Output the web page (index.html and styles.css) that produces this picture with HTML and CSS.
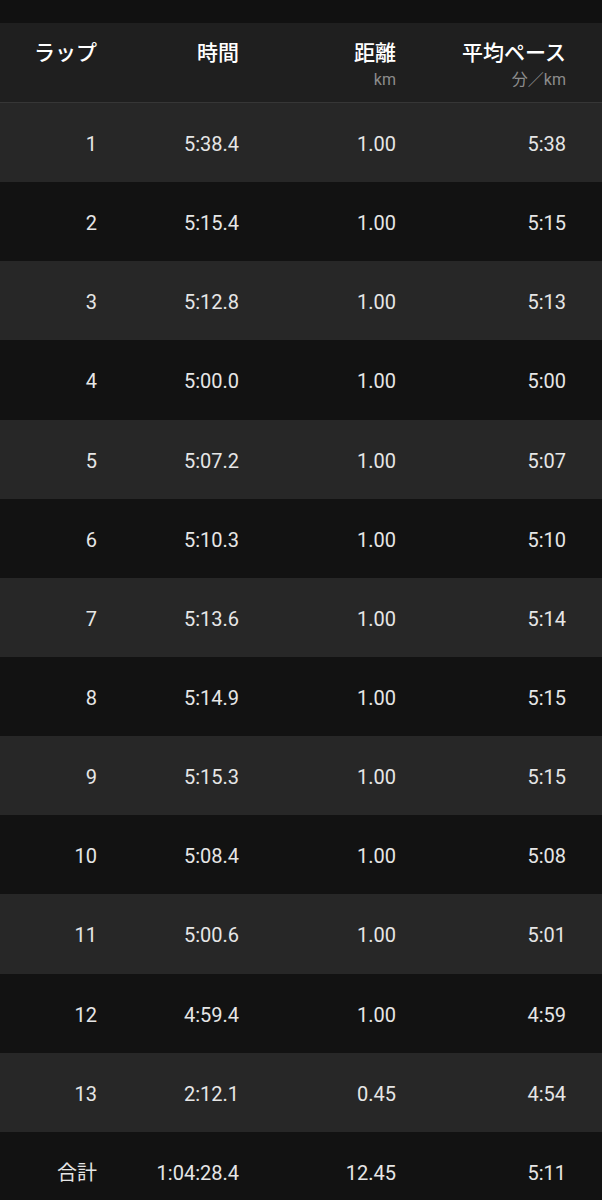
FILE: index.html
```html
<!DOCTYPE html>
<html lang="ja">
<head>
<meta charset="utf-8">
<link rel="stylesheet" href="styles.css">
</head>
<body>
<div class="topbar"></div>
<div class="table">
  <div class="row head">
    <div class="cell"><span class="title">ラップ</span></div>
    <div class="cell"><span class="title">時間</span></div>
    <div class="cell"><span class="title">距離</span><span class="unit">km</span></div>
    <div class="cell"><span class="title">平均ペース</span><span class="unit">分／km</span></div>
  </div>
  <div class="row odd"><div class="cell">1</div><div class="cell">5:38.4</div><div class="cell">1.00</div><div class="cell">5:38</div></div>
  <div class="row even"><div class="cell">2</div><div class="cell">5:15.4</div><div class="cell">1.00</div><div class="cell">5:15</div></div>
  <div class="row odd"><div class="cell">3</div><div class="cell">5:12.8</div><div class="cell">1.00</div><div class="cell">5:13</div></div>
  <div class="row even"><div class="cell">4</div><div class="cell">5:00.0</div><div class="cell">1.00</div><div class="cell">5:00</div></div>
  <div class="row odd"><div class="cell">5</div><div class="cell">5:07.2</div><div class="cell">1.00</div><div class="cell">5:07</div></div>
  <div class="row even"><div class="cell">6</div><div class="cell">5:10.3</div><div class="cell">1.00</div><div class="cell">5:10</div></div>
  <div class="row odd"><div class="cell">7</div><div class="cell">5:13.6</div><div class="cell">1.00</div><div class="cell">5:14</div></div>
  <div class="row even"><div class="cell">8</div><div class="cell">5:14.9</div><div class="cell">1.00</div><div class="cell">5:15</div></div>
  <div class="row odd"><div class="cell">9</div><div class="cell">5:15.3</div><div class="cell">1.00</div><div class="cell">5:15</div></div>
  <div class="row even"><div class="cell">10</div><div class="cell">5:08.4</div><div class="cell">1.00</div><div class="cell">5:08</div></div>
  <div class="row odd"><div class="cell">11</div><div class="cell">5:00.6</div><div class="cell">1.00</div><div class="cell">5:01</div></div>
  <div class="row even"><div class="cell">12</div><div class="cell">4:59.4</div><div class="cell">1.00</div><div class="cell">4:59</div></div>
  <div class="row odd"><div class="cell">13</div><div class="cell">2:12.1</div><div class="cell">0.45</div><div class="cell">4:54</div></div>
  <div class="row even total"><div class="cell">合計</div><div class="cell">1:04:28.4</div><div class="cell">12.45</div><div class="cell">5:11</div></div>
</div>
</body>
</html>
```

FILE: styles.css
```css
html, body {
  margin: 0;
  padding: 0;
  background: #111111;
}
body {
  width: 602px;
  font-family: Roboto, "Noto Sans CJK JP", sans-serif;
  color: #e6e6e6;
  overflow: hidden;
}
.topbar {
  height: 23px;
  background: #111111;
}
.table {
  display: flex;
  flex-direction: column;
}
.row {
  display: grid;
  grid-template-columns: 97px 142px 157px 170px;
  align-items: center;
  height: 79.15px;
  padding-top: 3px;
  box-sizing: border-box;
  font-size: 20px;
  line-height: 24px;
}
.cell {
  display: flex;
  flex-direction: column;
  align-items: flex-end;
  text-align: right;
  white-space: nowrap;
}
.head {
  align-items: start;
  padding-top: 18px;
  background: #1f1f1f;
  border-bottom: 1px solid #363636;
  height: 80px;
}
.title {
  color: #ffffff;
  font-weight: 500;
  font-size: 21px;
  line-height: 24px;
}
.unit {
  margin-top: 6px;
  color: #8c8c8c;
  font-size: 16px;
  line-height: 18px;
}
.odd {
  background: #272727;
}
.even {
  background: #121212;
}
```
